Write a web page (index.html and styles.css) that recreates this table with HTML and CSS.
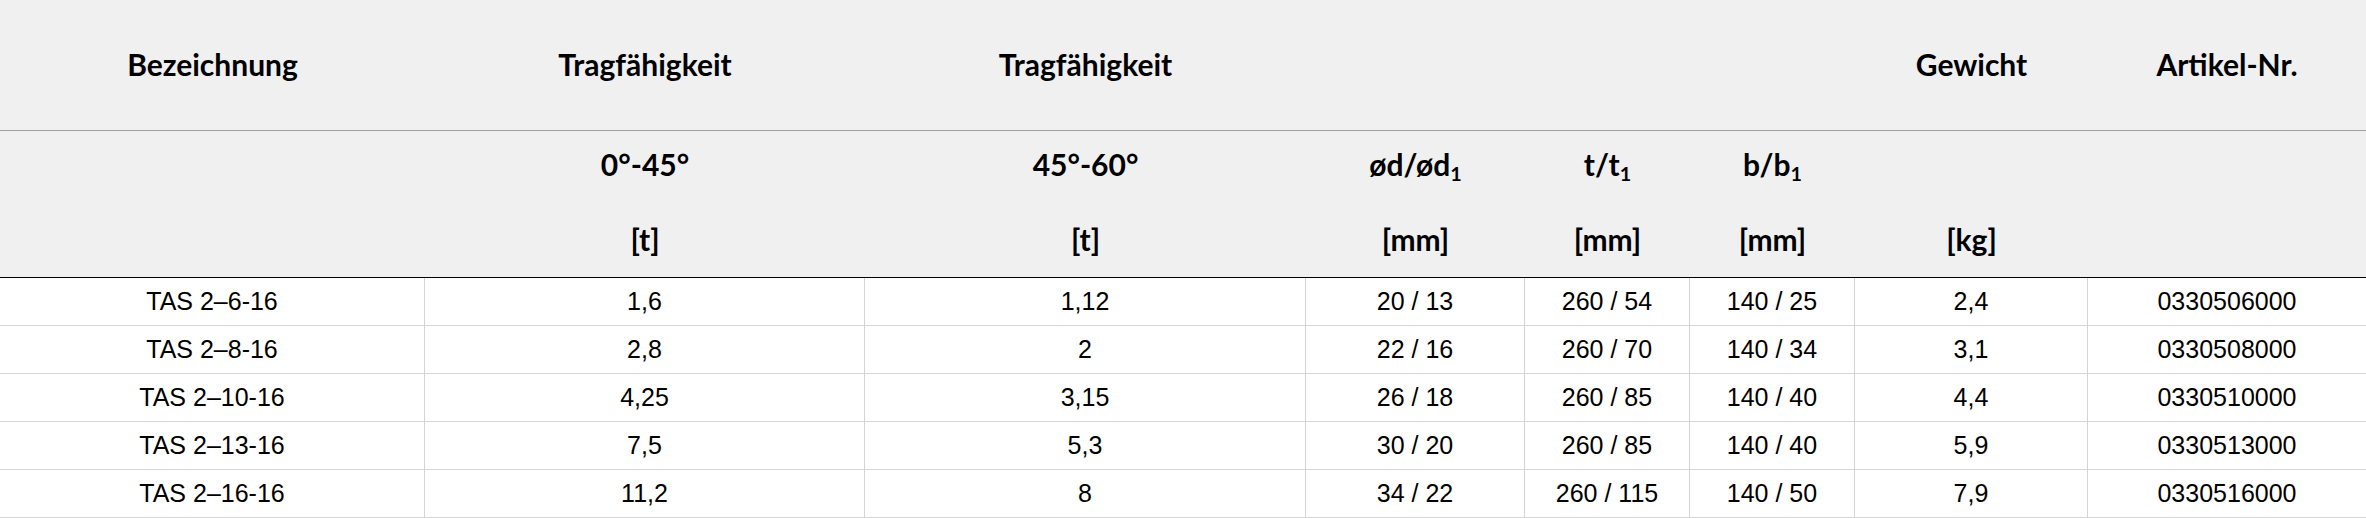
FILE: index.html
```html
<!DOCTYPE html>
<html lang="de">
<head>
<meta charset="utf-8">
<title>TAS Tabelle</title>
<link rel="stylesheet" href="styles.css">
</head>
<body>
<table class="spec">
  <colgroup>
    <col class="c1"><col class="c2"><col class="c3"><col class="c4"><col class="c5"><col class="c6"><col class="c7"><col class="c8">
  </colgroup>
  <thead>
    <tr class="h1">
      <th>Bezeichnung</th>
      <th>Tragfähigkeit</th>
      <th>Tragfähigkeit</th>
      <th></th>
      <th></th>
      <th></th>
      <th>Gewicht</th>
      <th>Artikel-Nr.</th>
    </tr>
    <tr class="h2">
      <th></th>
      <th>0°-45°</th>
      <th>45°-60°</th>
      <th>ød/ød<sub>1</sub></th>
      <th>t/t<sub>1</sub></th>
      <th>b/b<sub>1</sub></th>
      <th></th>
      <th></th>
    </tr>
    <tr class="h3">
      <th></th>
      <th>[t]</th>
      <th>[t]</th>
      <th>[mm]</th>
      <th>[mm]</th>
      <th>[mm]</th>
      <th>[kg]</th>
      <th></th>
    </tr>
  </thead>
  <tbody>
    <tr><td>TAS 2–6-16</td><td>1,6</td><td>1,12</td><td>20 / 13</td><td>260 / 54</td><td>140 / 25</td><td>2,4</td><td>0330506000</td></tr>
    <tr><td>TAS 2–8-16</td><td>2,8</td><td>2</td><td>22 / 16</td><td>260 / 70</td><td>140 / 34</td><td>3,1</td><td>0330508000</td></tr>
    <tr><td>TAS 2–10-16</td><td>4,25</td><td>3,15</td><td>26 / 18</td><td>260 / 85</td><td>140 / 40</td><td>4,4</td><td>0330510000</td></tr>
    <tr><td>TAS 2–13-16</td><td>7,5</td><td>5,3</td><td>30 / 20</td><td>260 / 85</td><td>140 / 40</td><td>5,9</td><td>0330513000</td></tr>
    <tr><td>TAS 2–16-16</td><td>11,2</td><td>8</td><td>34 / 22</td><td>260 / 115</td><td>140 / 50</td><td>7,9</td><td>0330516000</td></tr>
  </tbody>
</table>
</body>
</html>
```

FILE: styles.css
```css
html, body {
  margin: 0;
  padding: 0;
  background: #ffffff;
}

.spec {
  width: 2366px;
  table-layout: fixed;
  border-collapse: separate;
  border-spacing: 0;
  color: #000000;
}

.c1 { width: 425px; }
.c2 { width: 440px; }
.c3 { width: 441px; }
.c4 { width: 219px; }
.c5 { width: 165px; }
.c6 { width: 165px; }
.c7 { width: 233px; }
.c8 { width: 278px; }

.spec th {
  background: #f0f0f0;
  font-family: Lato, "Open Sans", sans-serif;
  font-weight: 700;
  font-size: 30px;
  text-align: center;
  vertical-align: middle;
  padding: 0;
  line-height: 1;
}

.spec .h1 { height: 131px; }
.spec .h1 th { border-bottom: 1px solid #a0a0a0; padding-bottom: 2px; }
.spec .h2 { height: 73px; }
.spec .h2 th { padding-bottom: 8px; }
.spec .h3 { height: 74px; }
.spec .h3 th { border-bottom: 1px solid #000000; padding-bottom: 4px; }

.spec sub {
  font-size: 0.66em;
  vertical-align: -0.25em;
  line-height: 0;
}

.spec tbody tr { height: 48px; }

.spec td {
  font-family: "Liberation Sans", Arial, sans-serif;
  font-size: 25px;
  text-align: center;
  vertical-align: middle;
  padding: 0;
  line-height: 1;
  border-bottom: 1px solid #d4d4d4;
  border-right: 1px solid #d4d4d4;
}

.spec td:last-child { border-right: none; }
```
